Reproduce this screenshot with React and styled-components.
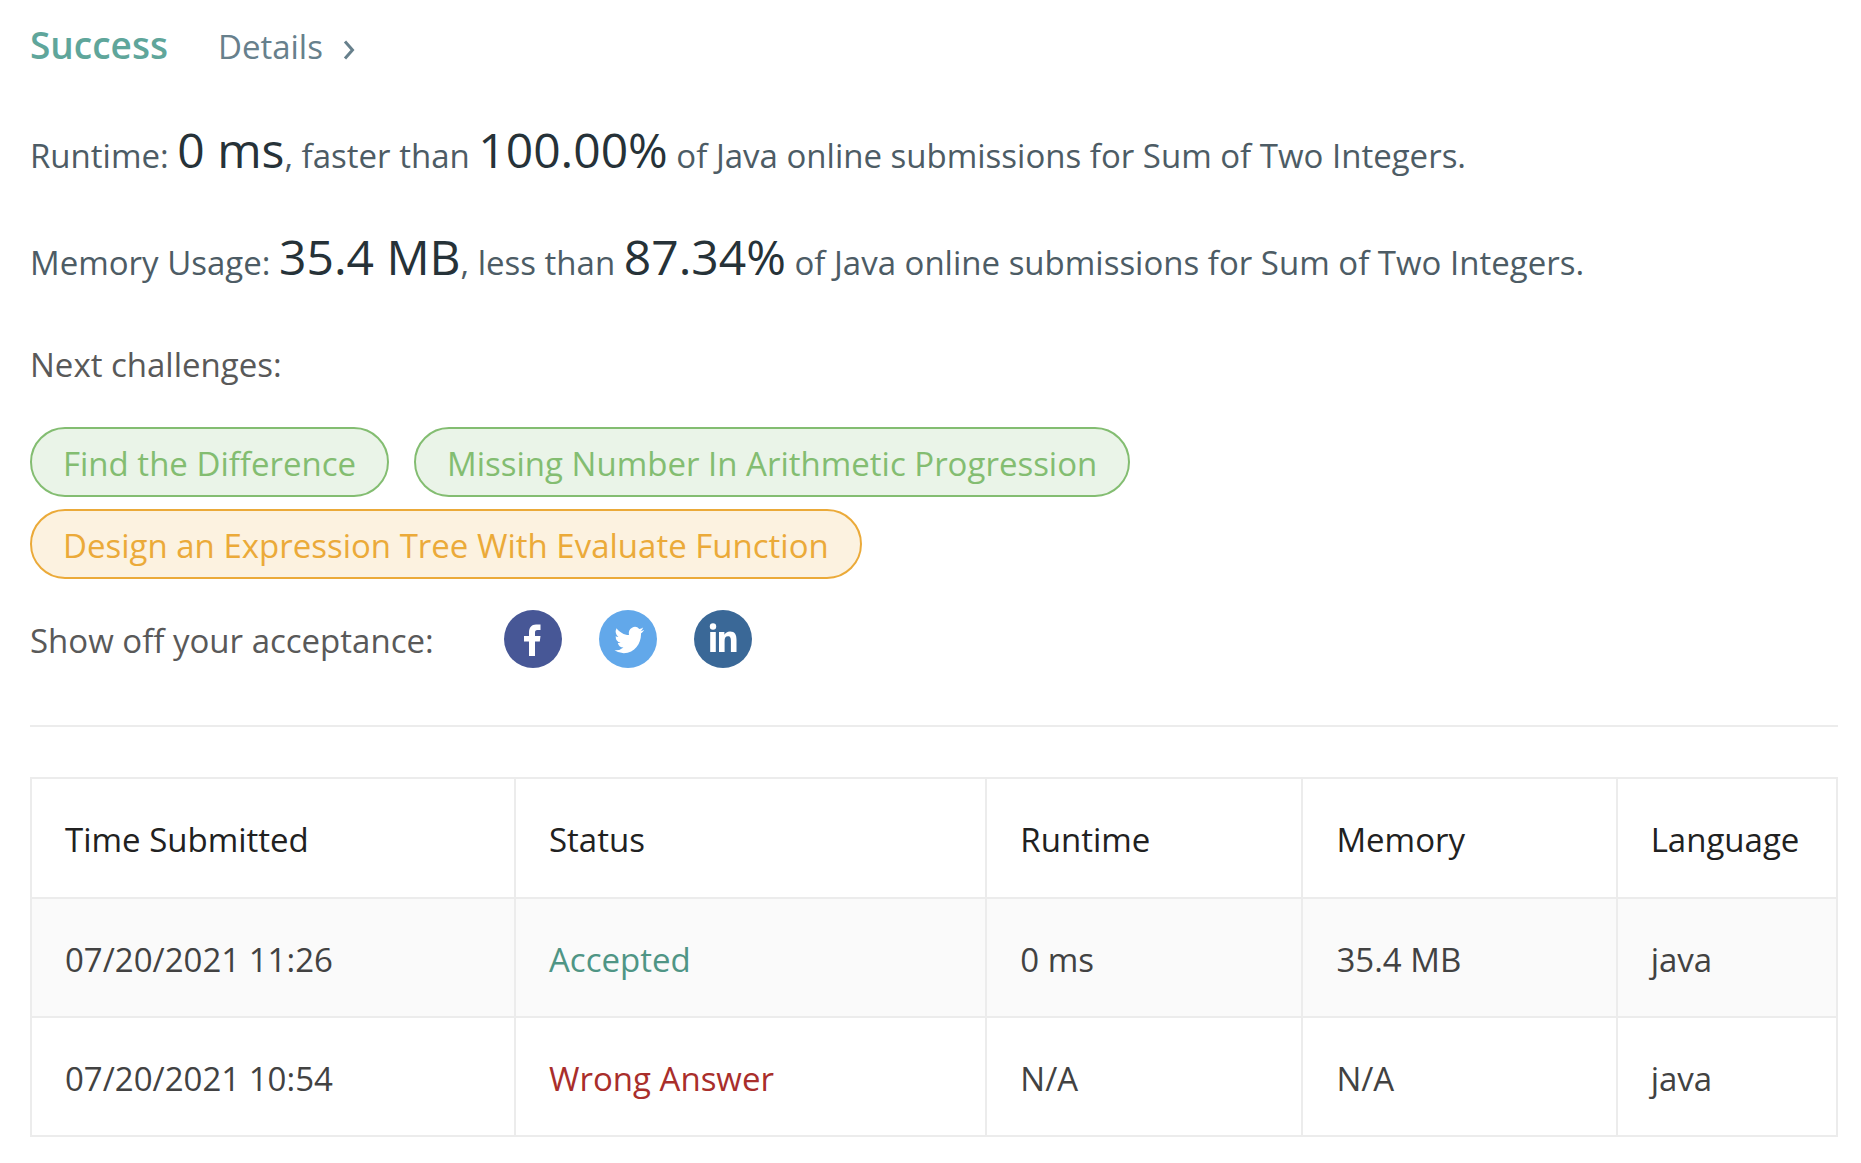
import React from "react";
import styled, { createGlobalStyle } from "styled-components";

const GlobalStyle = createGlobalStyle`
  *, *::before, *::after { box-sizing: border-box; }
  body {
    margin: 0;
    background: #fff;
    color: #424242;
    font-family: "Open Sans", "Noto Sans", sans-serif;
    font-size: 33px;
    line-height: 48px;
  }
`;

const Page = styled.main`
  padding: 21px 23px 24px 30px;
`;

const Header = styled.header`
  display: flex;
  align-items: baseline;
  gap: 50px;
  padding-bottom: 11px;
`;

const Result = styled.h1`
  margin: 0;
  color: #5fa69b;
  font-size: 37px;
  font-weight: 600;
  line-height: 48px;
`;

const DetailsLink = styled.a`
  display: inline-flex;
  align-items: center;
  gap: 20px;
  color: #67808c;
  text-decoration: none;
`;

const Chevron = styled.svg`
  width: 12px;
  height: 20px;
  margin-top: 5px;
  fill: none;
  stroke: currentColor;
  stroke-width: 3;
`;

const Stat = styled.p`
  margin: 0;
  padding-top: 35px;
  color: #4d5c65;
  line-height: 66px;
`;

const Figure = styled.span`
  color: #263238;
  font-size: 48px;
`;

const Label = styled.p`
  margin: 0;
  color: #595959;
  line-height: 54px;
`;

const Challenges = styled.section`
  padding-top: 42px;
`;

const TagList = styled.div`
  display: flex;
  flex-wrap: wrap;
  gap: 12px 25px;
  max-width: 1400px;
  padding-top: 35px;
`;

const tones = {
  easy: { ink: "#83bd71", fill: "#eaf4e8" },
  medium: { ink: "#ebaa39", fill: "#fcf2e0" },
};

const Tag = styled.a`
  display: block;
  padding: 12px 31px 8px;
  border: 2px solid ${(p) => tones[p.$tone].ink};
  border-radius: 35px;
  background: ${(p) => tones[p.$tone].fill};
  color: ${(p) => tones[p.$tone].ink};
  line-height: 46px;
  white-space: nowrap;
  text-decoration: none;
`;

const Share = styled.section`
  display: flex;
  align-items: flex-end;
  padding: 31px 0 57px;
`;

const ShareLinks = styled.div`
  display: flex;
  gap: 37px;
  padding-left: 70px;
`;

const ShareLink = styled.a`
  display: block;
  width: 58px;
  height: 58px;
  border-radius: 50%;
  background: ${(p) => p.$color};
`;

const Glyph = styled.svg`
  display: block;
  width: 58px;
  height: 58px;
  fill: #fff;
`;

const Divider = styled.hr`
  margin: 0 0 50px;
  border: 0;
  border-top: 2px solid #ececec;
`;

const Table = styled.table`
  width: 100%;
  table-layout: fixed;
  border-collapse: collapse;
`;

const Col = styled.col`
  width: ${(p) => p.$width};
`;

const Row = styled.tr`
  background: ${(p) => (p.$shaded ? "#fafafa" : "#fff")};
`;

const HeadCell = styled.th`
  height: 120px;
  padding: 4px 33px 0;
  border: 2px solid #ececec;
  color: #212121;
  font-weight: 400;
  text-align: left;
`;

const Cell = styled.td`
  height: 119px;
  padding: 4px 33px 0;
  border: 2px solid #ececec;
`;

const StatusLink = styled.a`
  color: ${(p) => (p.$ok ? "#4f9585" : "#a92e2b")};
  text-decoration: none;
`;

const submissions = [
  { time: "07/20/2021 11:26", status: "Accepted", ok: true, runtime: "0 ms", memory: "35.4 MB", language: "java" },
  { time: "07/20/2021 10:54", status: "Wrong Answer", ok: false, runtime: "N/A", memory: "N/A", language: "java" },
];

export default function App() {
  return (
    <>
      <GlobalStyle />
      <Page>
        <Header>
          <Result>Success</Result>
          <DetailsLink href="#details">
            Details
            <Chevron viewBox="0 0 12 20" aria-hidden="true">
              <path d="M2 1.5 9.5 10 2 18.5" />
            </Chevron>
          </DetailsLink>
        </Header>

        <Stat>
          Runtime: <Figure>0 ms</Figure>, faster than <Figure>100.00%</Figure> of Java online submissions for Sum of Two
          Integers.
        </Stat>
        <Stat>
          Memory Usage: <Figure>35.4 MB</Figure>, less than <Figure>87.34%</Figure> of Java online submissions for Sum
          of Two Integers.
        </Stat>

        <Challenges>
          <Label>Next challenges:</Label>
          <TagList>
            <Tag href="#find-the-difference" $tone="easy">Find the Difference</Tag>
            <Tag href="#missing-number" $tone="easy">Missing Number In Arithmetic Progression</Tag>
            <Tag href="#expression-tree" $tone="medium">Design an Expression Tree With Evaluate Function</Tag>
          </TagList>
        </Challenges>

        <Share>
          <Label>Show off your acceptance:</Label>
          <ShareLinks>
            <ShareLink href="#facebook" aria-label="Facebook" $color="#475796">
              <Glyph viewBox="0 0 58 58" aria-hidden="true">
                <path d="M25 46V31.5h-5V26h5v-3.500C25 17.500 27.500 14.500 32 14.500h4.500V20H33.500C31.500 20 31 21 31 22.700V26h5.500l-.7 5.500H31V46Z" />
              </Glyph>
            </ShareLink>
            <ShareLink href="#twitter" aria-label="Twitter" $color="#62a8ea">
              <Glyph viewBox="0 0 58 58" aria-hidden="true">
                <path transform="translate(15.500 14) scale(1.230 1.340)" d="M23.950 4.570a10 10 0 0 1-2.820.77 4.960 4.960 0 0 0 2.160-2.720c-.95.55-2 .96-3.130 1.180a4.920 4.920 0 0 0-8.380 4.480C7.690 8.100 4.070 6.130 1.640 3.160a4.920 4.920 0 0 0 1.520 6.570 4.900 4.900 0 0 1-2.230-.61v.06a4.920 4.920 0 0 0 3.950 4.830 5 5 0 0 1-2.210.08 4.940 4.940 0 0 0 4.600 3.420A9.870 9.870 0 0 1 0 19.540a14 14 0 0 0 7.550 2.210c9.050 0 14-7.500 14-13.980 0-.21 0-.42-.02-.63a9.940 9.940 0 0 0 2.460-2.550Z" />
              </Glyph>
            </ShareLink>
            <ShareLink href="#linkedin" aria-label="LinkedIn" $color="#3a6897">
              <Glyph viewBox="0 0 58 58" aria-hidden="true">
                <circle cx="19" cy="16.500" r="3.200" />
                <path d="M16.200 22h5.600v20h-5.600ZM25 22h5.400v2.700c1-1.800 3-3.200 5.600-3.200 5 0 6.500 3.300 6.500 8.200V42h-5.600V31c0-2.700-.4-4.800-2.900-4.800-2.600 0-3.400 2-3.400 4.700V42H25Z" />
              </Glyph>
            </ShareLink>
          </ShareLinks>
        </Share>

        <Divider />

        <Table>
          <colgroup>
            <Col $width="26.8%" />
            <Col $width="26.1%" />
            <Col $width="17.5%" />
            <Col $width="17.4%" />
            <Col />
          </colgroup>
          <thead>
            <Row>
              <HeadCell scope="col">Time Submitted</HeadCell>
              <HeadCell scope="col">Status</HeadCell>
              <HeadCell scope="col">Runtime</HeadCell>
              <HeadCell scope="col">Memory</HeadCell>
              <HeadCell scope="col">Language</HeadCell>
            </Row>
          </thead>
          <tbody>
            {submissions.map((s, i) => (
              <Row key={s.time} $shaded={i % 2 === 0}>
                <Cell>{s.time}</Cell>
                <Cell>
                  <StatusLink href="#submission" $ok={s.ok}>{s.status}</StatusLink>
                </Cell>
                <Cell>{s.runtime}</Cell>
                <Cell>{s.memory}</Cell>
                <Cell>{s.language}</Cell>
              </Row>
            ))}
          </tbody>
        </Table>
      </Page>
    </>
  );
}
